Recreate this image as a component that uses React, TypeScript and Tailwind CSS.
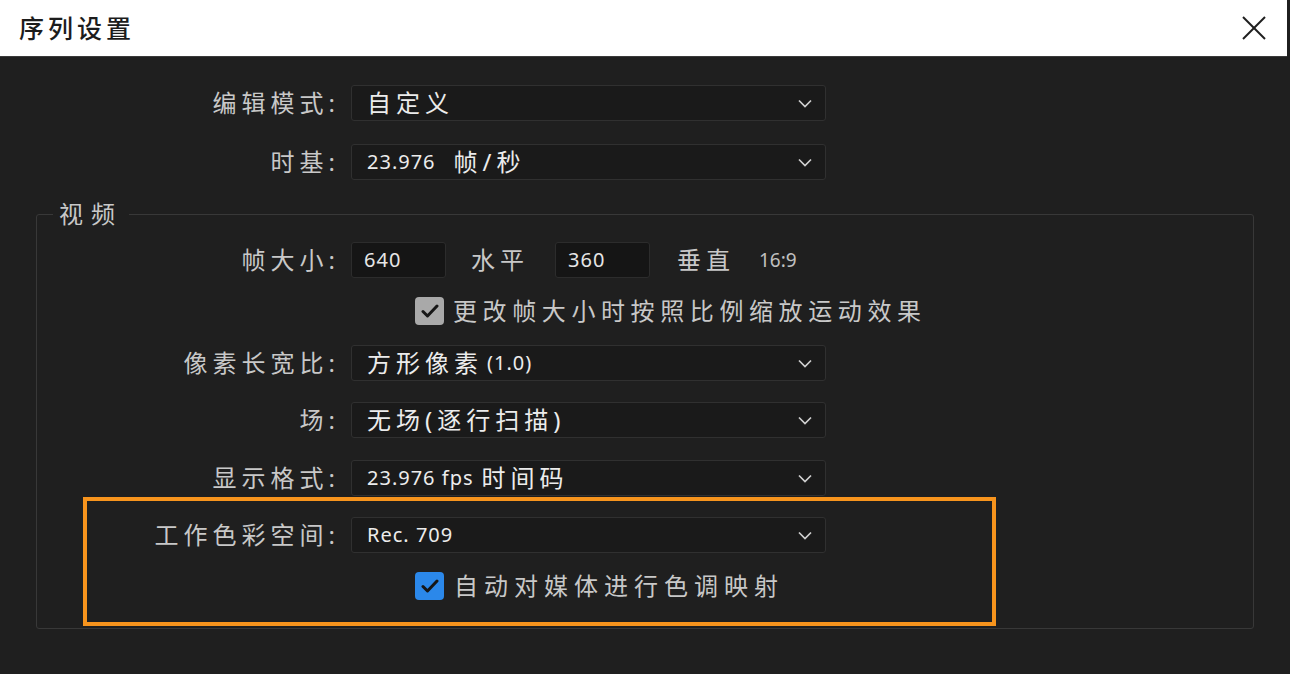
import React from "react";

function Chevron() {
  return (
    <svg width="14" height="9" viewBox="0 0 14 9" className="shrink-0">
      <polyline points="1,1.5 7,7.5 13,1.5" fill="none" stroke="#d0d0d0" strokeWidth="1.7" />
    </svg>
  );
}

function Cjk({ children }: { children: React.ReactNode }) {
  return <span className="text-[24px] tracking-[5px]">{children}</span>;
}

function Lat({ children }: { children: React.ReactNode }) {
  return <span className="text-[20px] tracking-[1px]">{children}</span>;
}

function Dropdown({ children }: { children: React.ReactNode }) {
  return (
    <div className="ml-[16px] flex h-[36px] w-[475px] shrink-0 items-center rounded-[3px] border border-[#303030] bg-[#1a1a1a] pl-[15px] pr-[13px] text-[#ececec]">
      <div className="flex flex-1 items-center whitespace-nowrap leading-none">{children}</div>
      <Chevron />
    </div>
  );
}

function Label({ w, children }: { w: string; children: React.ReactNode }) {
  return (
    <div className={`${w} shrink-0 whitespace-nowrap text-right text-[24px] leading-none tracking-[5px] text-[#c8c8c8]`}>
      <span className="-mr-[5px]">{children}</span>
    </div>
  );
}

function Check({ blue }: { blue?: boolean }) {
  return (
    <div
      className={`flex h-[28px] w-[29px] shrink-0 items-center justify-center rounded-[4px] ${
        blue ? "bg-[#2b88ea]" : "bg-[#a9a9a9]"
      }`}
    >
      <svg width="18" height="14" viewBox="0 0 18 14">
        <polyline points="2,7.5 6.5,12 16,2" fill="none" stroke="#161616" strokeWidth="3" strokeLinecap="round" strokeLinejoin="round" />
      </svg>
    </div>
  );
}

function NumBox({ children }: { children: React.ReactNode }) {
  return (
    <div className="flex h-[36px] w-[95px] shrink-0 items-center rounded-[3px] border border-[#2c2c2c] bg-[#151515] pl-[12px] text-[20px] leading-none tracking-[1px] text-[#e6e6e6]">
      {children}
    </div>
  );
}

export default function App() {
  return (
    <div className="flex h-[674px] w-[1290px] flex-col overflow-hidden bg-[#1f1f1f] font-['Noto_Sans','Noto_Sans_CJK_SC',sans-serif]">
      {/* title bar */}
      <div className="flex h-[57px] w-[1287px] shrink-0 items-center justify-between border-b border-[#3a3a3a] bg-white pl-[19px] pr-[20px]">
        <span className="text-[25px] font-medium leading-none tracking-[4px] text-[#1c1c1c]">序列设置</span>
        <svg width="26" height="26" viewBox="0 0 26 26">
          <line x1="2" y1="2" x2="24" y2="24" stroke="#1e1e1e" strokeWidth="2" />
          <line x1="24" y1="2" x2="2" y2="24" stroke="#1e1e1e" strokeWidth="2" />
        </svg>
      </div>

      <div className="flex flex-col pt-[28px]">
        <div className="flex h-[36px] items-center">
          <Label w="w-[335px]">编辑模式:</Label>
          <Dropdown>
            <Cjk>自定义</Cjk>
          </Dropdown>
        </div>
        <div className="mt-[23px] flex h-[36px] items-center">
          <Label w="w-[335px]">时基:</Label>
          <Dropdown>
            <Lat>23.976</Lat>
            <span className="ml-[18px]">
              <Cjk>帧/秒</Cjk>
            </span>
          </Dropdown>
        </div>

        {/* video group */}
        <div className="relative ml-[36px] mt-[34px] w-[1218px] rounded-[3px] border border-[#383838] pb-[2px]">
          <div className="absolute -top-[15px] left-[16px] bg-[#1f1f1f] px-[6px] text-[24px] leading-[28px] tracking-[8px] text-[#c8c8c8]">
            视频
          </div>

          <div className="mt-[27px] flex h-[36px] items-center">
            <Label w="w-[298px]">帧大小:</Label>
            <div className="ml-[16px]">
              <NumBox>640</NumBox>
            </div>
            <span className="ml-[25px] text-[24px] leading-none tracking-[5px] text-[#c8c8c8]">水平</span>
            <div className="ml-[26px]">
              <NumBox>360</NumBox>
            </div>
            <span className="ml-[27px] text-[24px] leading-none tracking-[5px] text-[#c8c8c8]">垂直</span>
            <span className="ml-[24px] text-[19px] leading-none text-[#c0c0c0]">16:9</span>
          </div>

          <div className="mt-[19px] flex h-[28px] items-center pl-[378px]">
            <Check />
            <span className="ml-[9px] text-[24px] leading-none tracking-[5.6px] text-[#c8c8c8]">
              更改帧大小时按照比例缩放运动效果
            </span>
          </div>

          <div className="mt-[20px] flex h-[36px] items-center">
            <Label w="w-[298px]">像素长宽比:</Label>
            <Dropdown>
              <Cjk>方形像素</Cjk>
              <span className="ml-[4px]">
                <Lat>(1.0)</Lat>
              </span>
            </Dropdown>
          </div>

          <div className="mt-[21px] flex h-[36px] items-center">
            <Label w="w-[298px]">场:</Label>
            <Dropdown>
              <Cjk>无场(逐行扫描)</Cjk>
            </Dropdown>
          </div>

          <div className="mt-[22px] flex h-[36px] items-center">
            <Label w="w-[298px]">显示格式:</Label>
            <Dropdown>
              <Lat>23.976 fps</Lat>
              <span className="ml-[8px]">
                <Cjk>时间码</Cjk>
              </span>
            </Dropdown>
          </div>

          {/* highlighted area */}
          <div className="ml-[46px] mt-[1px] w-[913px] border-[4px] border-[#f7941d] pb-[22px] pt-[16px]">
            <div className="flex h-[36px] items-center">
              <Label w="w-[248px]">工作色彩空间:</Label>
              <Dropdown>
                <Lat>Rec. 709</Lat>
              </Dropdown>
            </div>
            <div className="mt-[19px] flex h-[28px] items-center pl-[328px]">
              <Check blue />
              <span className="ml-[10px] text-[24px] leading-none tracking-[6px] text-[#c8c8c8]">
                自动对媒体进行色调映射
              </span>
            </div>
          </div>
        </div>
      </div>
    </div>
  );
}
